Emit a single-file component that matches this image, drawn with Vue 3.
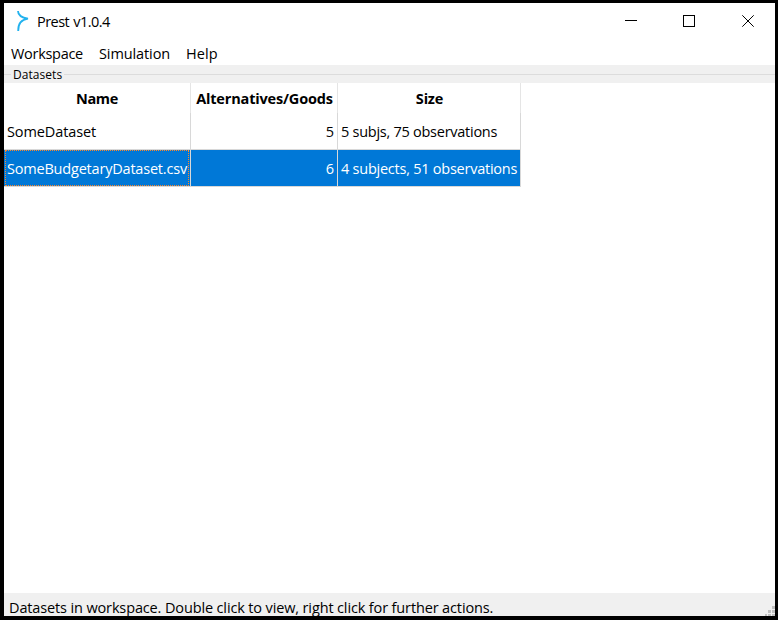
<script setup>
const menus = [
  { label: 'Workspace', cls: 'm-work' },
  { label: 'Simulation', cls: 'm-sim' },
  { label: 'Help', cls: 'm-help' },
]
</script>

<template>
  <div class="frame">
    <header class="titlebar">
      <svg class="logo" width="14" height="22" viewBox="0 0 14 22">
        <path d="M2 1 C2 4.5 4.5 7.5 12 8.7 C5.5 9.6 2 13 2.2 21" fill="none" stroke="#22b2ee" stroke-width="1.8" stroke-linejoin="bevel" />
      </svg>
      <span class="title"><span class="t-title">Prest v1.0.4</span></span>
      <svg class="controls" width="130" height="12" viewBox="0 0 130 12" fill="none" stroke="#000">
        <path d="M0 5.5H12" />
        <rect x="58.5" y="0.5" width="11" height="11" />
        <path d="M117.3 0.3L128.7 11.7M128.7 0.3L117.3 11.7" />
      </svg>
    </header>
    <nav class="menubar">
      <span v-for="m in menus" :key="m.label" :class="m.cls">{{ m.label }}</span>
    </nav>
    <div class="group"><span class="t-group">Datasets</span></div>
    <main class="content">
      <div class="table">
        <div class="row head">
          <div class="cell"><span class="h-name">Name</span></div>
          <div class="cell"><span class="h-alt">Alternatives/Goods</span></div>
          <div class="cell"><span class="h-size">Size</span></div>
        </div>
        <div class="row">
          <div class="cell"><span class="c-some">SomeDataset</span></div>
          <div class="cell num"><span>5</span></div>
          <div class="cell"><span class="c-five">5 subjs, 75 observations</span></div>
        </div>
        <div class="row selected">
          <div class="cell focus"><span class="c-budget">SomeBudgetaryDataset.csv</span></div>
          <div class="cell num"><span>6</span></div>
          <div class="cell"><span class="c-four">4 subjects, 51 observations</span></div>
        </div>
      </div>
    </main>
    <footer class="status">
      <span class="t-status">Datasets in workspace. Double click to view, right click for further actions.</span>
      <svg class="grip" width="10" height="10" viewBox="0 0 10 10" fill="#bfbfbf">
        <path d="M7 0h3v3h-3zM3 4h3v3h-3zM7 4h3v3h-3zM0 8h2v2h-2zM3 8h3v2h-3zM7 8h3v2h-3z" />
      </svg>
    </footer>
  </div>
</template>

<style>
body {
  margin: 0;
  background: #000;
}
</style>

<style scoped>
.frame {
  box-sizing: border-box;
  width: 778px;
  height: 620px;
  border: solid #000;
  border-width: 3px 3px 4px 4px;
  background: #fff;
  display: flex;
  flex-direction: column;
  font: 14.5px/20px "Open Sans", "Noto Sans", sans-serif;
  color: #000;
  white-space: nowrap;
  overflow: hidden;
}
.titlebar {
  height: 38px;
  display: flex;
  align-items: flex-start;
}
.logo {
  margin: 7px 0 0 12px;
}
.title {
  flex: 1;
  margin: 9px 0 0 7px;
}
.t-title { letter-spacing: -0.55px; word-spacing: 1px; }
.controls {
  margin: 12px 20px 0 0;
}
.menubar {
  height: 24px;
  box-sizing: border-box;
  padding: 3px 0 0 7px;
  display: flex;
}
.menubar span {
  flex: none;
}
.m-work { width: 88px; letter-spacing: -0.3px; }
.m-sim { width: 87px; letter-spacing: -0.1px; }
.m-help { letter-spacing: 0.05px; }
.group {
  height: 18px;
  background: #f0f0f0;
  display: flex;
  align-items: center;
  font-size: 12px;
  line-height: 18px;
}
.t-group {
  padding-top: 2px;
  line-height: 16px;
  letter-spacing: 0.05px;
}
.group::before {
  content: "";
  width: 7px;
  height: 1px;
  margin-right: 2px;
  background: #dcdcdc;
}
.group::after {
  content: "";
  flex: 1;
  height: 1px;
  margin-left: 2px;
  background: #dcdcdc;
}
.content {
  flex: 1;
}
.table {
  width: 517px;
}
.row {
  display: grid;
  grid-template-columns: 187px 147px 183px;
  height: 37px;
}
.cell {
  box-sizing: border-box;
  border-right: 1px solid #d8d8d8;
  border-bottom: 1px solid #d8d8d8;
  padding: 2px 3px 0;
  display: flex;
  align-items: center;
}
.head {
  height: 30px;
  font-weight: 700;
}
.head .cell {
  justify-content: center;
  border-bottom: 0;
  border-right-color: #e5e5e5;
  padding: 2px 0 0;
}
.h-name { letter-spacing: -0.3px; }
.h-alt { letter-spacing: -0.17px; padding-left: 1px; }
.h-size { letter-spacing: -0.2px; padding-left: 1px; }
.c-some { letter-spacing: -0.1px; }
.c-five { letter-spacing: -0.26px; }
.c-budget { letter-spacing: -0.2px; }
.c-four { letter-spacing: -0.24px; }
.num {
  justify-content: flex-end;
}
.selected .cell {
  background: #0078d7;
  color: #fff;
}
.selected .focus {
  position: relative;
}
.focus::after {
  content: "";
  position: absolute;
  inset: 0 1px 0 1px;
  border: 1px dotted #ff8728;
}
.status {
  height: 23px;
  background: #f0f0f0;
  display: flex;
  justify-content: space-between;
  align-items: flex-end;
  padding-left: 5px;
}
.status span {
  line-height: 20px;
  height: 18px;
}
.t-status { letter-spacing: -0.135px; }
.grip {
  flex: none;
}
</style>
